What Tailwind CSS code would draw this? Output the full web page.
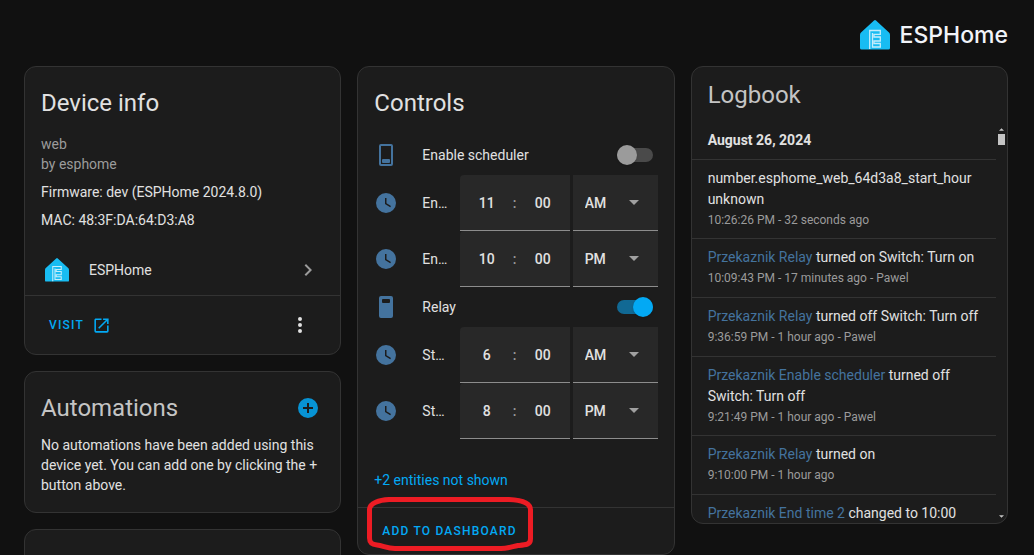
<!DOCTYPE html>
<html lang="en">
<head>
<meta charset="utf-8">
<title>ESPHome device</title>
<script src="https://cdn.jsdelivr.net/npm/@tailwindcss/browser@4"></script>
</head>
<body class="h-screen overflow-hidden bg-[#111111] font-['Roboto',sans-serif] text-sm text-[#e1e1e1]">
<svg class="hidden">
  <symbol id="house" viewBox="0 0 30 30">
    <path fill="#18bcf2" d="M14 .6Q15 -.4 16 .6L29 12.6Q30 13.5 30 15V28Q30 29.5 28.500 29.500H1.500Q0 29.500 0 28V15Q0 13.500 1 12.600Z"/>
    <path fill="none" stroke="#c5edfb" stroke-width="1.300" d="M9.700 29V10.500H20.300V14.300H14V17H20.300V21H14V23.500H20.300V27H12.500V13"/>
  </symbol>
  <symbol id="clock" viewBox="0 0 24 24">
    <path fill="currentColor" d="M12,2A10,10 0 0,0 2,12A10,10 0 0,0 12,22A10,10 0 0,0 22,12A10,10 0 0,0 12,2M16.2,16.2L11,13V7H12.5V12.2L17,14.9L16.2,16.2Z"/>
  </symbol>
  <symbol id="caret" viewBox="0 0 10 5"><path fill="currentColor" d="M0 0H10L5 5Z"/></symbol>
</svg>

<main class="pl-6 pr-[26px]">
  <header class="flex h-[66px] items-center justify-end gap-[10px] pt-1">
    <svg class="h-[30px] w-[30px]"><use href="#house"/></svg>
    <span class="pt-px font-['Inter',sans-serif] text-[23px] font-medium text-[#f2f4f9]">ESPHome</span>
  </header>

  <div class="grid grid-cols-3 items-start gap-4">
    <div class="flex flex-col gap-4">
      <section class="rounded-xl border border-[#333333] bg-[#1c1c1c]">
        <h1 class="px-4 pt-3 text-2xl leading-12">Device info</h1>
        <div class="px-4 pt-[7px] leading-5">
          <div class="text-[#9b9b9b]">web</div>
          <div class="text-[#9b9b9b]">by esphome</div>
          <div class="mt-2">Firmware: dev (ESPHome 2024.8.0)</div>
          <div class="mt-2">MAC: 48:3F:DA:64:D3:A8</div>
        </div>
        <a href="#" class="mt-4 flex h-12 items-center pl-5 pr-5">
          <svg class="h-6 w-6"><use href="#house"/></svg>
          <span class="ml-5 flex-1">ESPHome</span>
          <svg class="h-6 w-6 text-[#9b9b9b]" viewBox="0 0 24 24"><path fill="currentColor" d="M8.59,16.58L13.17,12L8.59,7.41L10,6L16,12L10,18L8.59,16.58Z"/></svg>
        </a>
        <div class="mt-px flex h-[59px] items-center justify-between border-t border-[#333333] pl-6 pr-7">
          <a href="#" class="flex items-center gap-2 text-xs font-medium tracking-widest text-[#03a9f4]">VISIT
            <svg class="h-[19px] w-[19px]" viewBox="0 0 24 24"><path fill="currentColor" d="M14,3V5H17.59L7.76,14.83L9.17,16.24L19,6.41V10H21V3M19,19H5V5H12V3H5C3.89,3 3,3.9 3,5V19A2,2 0 0,0 5,21H19A2,2 0 0,0 21,19V12H19V19Z"/></svg>
          </a>
          <button aria-label="More actions"><svg class="h-6 w-6" viewBox="0 0 24 24"><path fill="currentColor" d="M12,16A2,2 0 0,1 14,18A2,2 0 0,1 12,20A2,2 0 0,1 10,18A2,2 0 0,1 12,16M12,10A2,2 0 0,1 14,12A2,2 0 0,1 12,14A2,2 0 0,1 10,12A2,2 0 0,1 12,10M12,4A2,2 0 0,1 14,6A2,2 0 0,1 12,8A2,2 0 0,1 10,6A2,2 0 0,1 12,4Z"/></svg></button>
        </div>
      </section>

      <section class="rounded-xl border border-[#333333] bg-[#1c1c1c] pb-[17px]">
        <div class="flex items-center justify-between pl-4 pr-5 pt-3">
          <h1 class="text-2xl leading-12 text-[#c4c4c4]">Automations</h1>
          <button aria-label="Add automation"><svg class="h-6 w-6 text-[#0793d4]" viewBox="0 0 24 24"><path fill="currentColor" d="M17,13H13V17H11V13H7V11H11V7H13V11H17M12,2A10,10 0 0,0 2,12A10,10 0 0,0 12,22A10,10 0 0,0 22,12A10,10 0 0,0 12,2Z"/></svg></button>
        </div>
        <p class="px-4 pt-[3px] leading-5">No automations have been added using this device yet. You can add one by clicking the + button above.</p>
      </section>

      <section class="h-36 rounded-xl border border-[#333333] bg-[#1c1c1c]"></section>
    </div>

    <section class="rounded-xl border border-[#333333] bg-[#1c1c1c]">
      <h1 class="px-4 pt-3 text-2xl leading-12">Controls</h1>
      <div class="px-4 pt-2">
        <div class="flex h-10 items-center">
          <svg class="mr-6 h-6 w-6 text-[#44739e]" viewBox="0 0 24 24"><rect x="6" y="2" width="12" height="20" rx="1" fill="none" stroke="currentColor" stroke-width="2"/><rect x="8" y="16" width="8" height="4" rx="1" fill="currentColor"/></svg>
          <label for="sw1" class="flex-1">Enable scheduler</label>
          <input id="sw1" type="checkbox" role="switch" class="mr-[5px] flex h-[14px] w-9 appearance-none items-center rounded-full bg-[#4a4a4a] before:size-5 before:rounded-full before:bg-[#9b9b9b] before:shadow before:content-['']">
        </div>
        <div class="flex h-14 items-center">
          <svg class="mr-6 h-6 w-6 shrink-0 text-[#44739e]"><use href="#clock"/></svg>
          <span class="mr-2 min-w-0 flex-1 truncate">Enable scheduler end</span>
          <div class="mr-[3px] flex h-14 w-[110px] items-center rounded-tl border-b border-[#8d8d8d] bg-[#282828] pl-[13px] font-medium">
            <input aria-label="Hour" value="11" class="w-7 text-center"><span class="w-7 text-center text-[#9b9b9b]">:</span><input aria-label="Minute" value="00" class="w-7 text-center">
          </div>
          <div class="grid h-14 w-[85px] items-center border-b border-[#8d8d8d] bg-[#282828]">
            <select aria-label="AM or PM" class="col-start-1 row-start-1 h-full appearance-none pl-3 font-medium"><option selected>AM</option><option>PM</option></select>
            <svg class="pointer-events-none col-start-1 row-start-1 mr-[19px] h-[5px] w-[10px] justify-self-end text-[#a0a0a0]"><use href="#caret"/></svg>
          </div>
        </div>
        <div class="flex h-14 items-center">
          <svg class="mr-6 h-6 w-6 shrink-0 text-[#44739e]"><use href="#clock"/></svg>
          <span class="mr-2 min-w-0 flex-1 truncate">End time 2</span>
          <div class="mr-[3px] flex h-14 w-[110px] items-center rounded-tl border-b border-[#8d8d8d] bg-[#282828] pl-[13px] font-medium">
            <input aria-label="Hour" value="10" class="w-7 text-center"><span class="w-7 text-center text-[#9b9b9b]">:</span><input aria-label="Minute" value="00" class="w-7 text-center">
          </div>
          <div class="grid h-14 w-[85px] items-center border-b border-[#8d8d8d] bg-[#282828]">
            <select aria-label="AM or PM" class="col-start-1 row-start-1 h-full appearance-none pl-3 font-medium"><option>AM</option><option selected>PM</option></select>
            <svg class="pointer-events-none col-start-1 row-start-1 mr-[19px] h-[5px] w-[10px] justify-self-end text-[#a0a0a0]"><use href="#caret"/></svg>
          </div>
        </div>
        <div class="flex h-10 items-center">
          <svg class="mr-6 h-6 w-6 text-[#44739e]" viewBox="0 0 24 24"><path fill="currentColor" fill-rule="evenodd" d="M7 1H17Q19 1 19 3V21Q19 23 17 23H7Q5 23 5 21V3Q5 1 7 1ZM9 4Q8 4 8 5V7Q8 8 9 8H15Q16 8 16 7V5Q16 4 15 4Z"/></svg>
          <label for="sw2" class="flex-1">Relay</label>
          <input id="sw2" type="checkbox" role="switch" checked class="mr-[5px] flex h-[14px] w-9 appearance-none items-center justify-end rounded-full bg-[#116994] before:size-5 before:rounded-full before:bg-[#03a9f4] before:shadow before:content-['']">
        </div>
        <div class="flex h-14 items-center">
          <svg class="mr-6 h-6 w-6 shrink-0 text-[#44739e]"><use href="#clock"/></svg>
          <span class="mr-2 min-w-0 flex-1 truncate">Start time</span>
          <div class="mr-[3px] flex h-14 w-[110px] items-center rounded-tl border-b border-[#8d8d8d] bg-[#282828] pl-[13px] font-medium">
            <input aria-label="Hour" value="6" class="w-7 text-center"><span class="w-7 text-center text-[#9b9b9b]">:</span><input aria-label="Minute" value="00" class="w-7 text-center">
          </div>
          <div class="grid h-14 w-[85px] items-center border-b border-[#8d8d8d] bg-[#282828]">
            <select aria-label="AM or PM" class="col-start-1 row-start-1 h-full appearance-none pl-3 font-medium"><option selected>AM</option><option>PM</option></select>
            <svg class="pointer-events-none col-start-1 row-start-1 mr-[19px] h-[5px] w-[10px] justify-self-end text-[#a0a0a0]"><use href="#caret"/></svg>
          </div>
        </div>
        <div class="flex h-14 items-center">
          <svg class="mr-6 h-6 w-6 shrink-0 text-[#44739e]"><use href="#clock"/></svg>
          <span class="mr-2 min-w-0 flex-1 truncate">Start time 2</span>
          <div class="mr-[3px] flex h-14 w-[110px] items-center rounded-tl border-b border-[#8d8d8d] bg-[#282828] pl-[13px] font-medium">
            <input aria-label="Hour" value="8" class="w-7 text-center"><span class="w-7 text-center text-[#9b9b9b]">:</span><input aria-label="Minute" value="00" class="w-7 text-center">
          </div>
          <div class="grid h-14 w-[85px] items-center border-b border-[#8d8d8d] bg-[#282828]">
            <select aria-label="AM or PM" class="col-start-1 row-start-1 h-full appearance-none pl-3 font-medium"><option>AM</option><option selected>PM</option></select>
            <svg class="pointer-events-none col-start-1 row-start-1 mr-[19px] h-[5px] w-[10px] justify-self-end text-[#a0a0a0]"><use href="#caret"/></svg>
          </div>
        </div>
      </div>
      <button class="mt-[31px] px-4 leading-5 text-[#03a9f4]">+2 entities not shown</button>
      <div class="relative mt-[17px] flex h-[47px] items-center border-t border-[#333333] pl-6">
        <button class="text-xs font-medium tracking-widest text-[#03a9f4]">ADD TO DASHBOARD</button>
        <svg class="pointer-events-none absolute -top-[11px] left-[9px] h-[54px] w-[166px]" viewBox="0 0 166 54" fill="none" stroke="#ed1c24" stroke-width="5" stroke-linejoin="round"><path d="M22 2.500H142C154 3 163.500 6 163.500 13V42C163.500 48 158 48 151 48.500C144 50 140 51.500 134 51.500H28C20 51.500 16 48.500 10 48C5 47.500 2.500 46 2.500 41V12C3 6 12 3 22 2.500Z"/></svg>
      </div>
    </section>

    <section class="overflow-hidden rounded-xl border border-[#333333] bg-[#1c1c1c]">
      <h1 class="px-4 pb-2 pt-1 text-2xl leading-12 text-[#c4c4c4]">Logbook</h1>
      <div class="flex h-[396px]">
        <div class="min-w-0 flex-1 overflow-hidden leading-[21px]">
          <h2 class="h-8 px-4 pt-[3px] font-bold">August 26, 2024</h2>
          <ul>
            <li class="min-h-[59px] border-t border-[#333333] px-4 py-2">number.esphome_web_64d3a8_start_hour unknown<div class="text-xs leading-5 text-[#9b9b9b]">10:26:26 PM - 32 seconds ago</div></li>
            <li class="min-h-[59px] border-t border-[#333333] px-4 py-2"><a href="#" class="text-[#44739e]">Przekaznik Relay</a> turned on Switch: Turn on<div class="text-xs leading-5 text-[#9b9b9b]">10:09:43 PM - 17 minutes ago - Pawel</div></li>
            <li class="min-h-[59px] border-t border-[#333333] px-4 py-2"><a href="#" class="text-[#44739e]">Przekaznik Relay</a> turned off Switch: Turn off<div class="text-xs leading-5 text-[#9b9b9b]">9:36:59 PM - 1 hour ago - Pawel</div></li>
            <li class="min-h-[59px] border-t border-[#333333] px-4 py-2"><a href="#" class="text-[#44739e]">Przekaznik Enable scheduler</a> turned off Switch: Turn off<div class="text-xs leading-5 text-[#9b9b9b]">9:21:49 PM - 1 hour ago - Pawel</div></li>
            <li class="min-h-[59px] border-t border-[#333333] px-4 py-2"><a href="#" class="text-[#44739e]">Przekaznik Relay</a> turned on<div class="text-xs leading-5 text-[#9b9b9b]">9:10:00 PM - 1 hour ago</div></li>
            <li class="min-h-[59px] border-t border-[#333333] px-4 py-2"><a href="#" class="text-[#44739e]">Przekaznik End time 2</a> changed to 10:00</li>
          </ul>
        </div>
        <div class="flex w-[11px] flex-col items-center pt-[1px] pb-[5px] text-[#c4c4c4]" aria-hidden="true">
          <svg class="h-[3px] w-[5px] rotate-180"><use href="#caret"/></svg>
          <div class="mt-[3px] h-[11px] w-[7px] bg-[#c4c4c4]"></div>
          <svg class="mt-auto h-[3px] w-[5px]"><use href="#caret"/></svg>
        </div>
      </div>
    </section>
  </div>
</main>
</body>
</html>
